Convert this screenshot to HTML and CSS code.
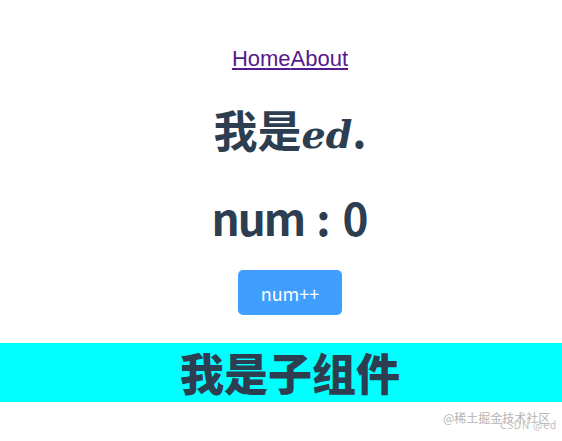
FILE: index.html
```html
<!DOCTYPE html>
<html lang="zh-CN">
<head>
<meta charset="utf-8">
<title>Vue App</title>
<link rel="stylesheet" href="styles.css">
</head>
<body>
<div class="app">
  <nav class="nav"><a href="#/" class="link">Home</a><a href="#/about" class="link">About</a></nav>
  <h1 class="title">我是<span class="name">ed</span>.</h1>
  <h1 class="count"><span class="num">num</span> : 0</h1>
  <button class="btn" type="button">num++</button>
  <div class="child"><h1 class="child-title">我是子组件</h1></div>
</div>
<div class="watermark"><span class="wm-main">@稀土掘金技术社区</span><span class="wm-sub">CSDN @ed</span></div>
</body>
</html>
```

FILE: styles.css
```css
html, body {
  margin: 0;
  padding: 0;
  background: #ffffff;
  overflow: hidden;
}
body {
  width: 562px;
  height: 441px;
  position: relative;
}
.app {
  width: 580px;
  text-align: center;
  color: #2c3e50;
  font-family: "Noto Sans CJK SC", sans-serif;
  display: flex;
  flex-direction: column;
  align-items: center;
}
.nav {
  padding-top: 45px;
  font-family: "Liberation Sans", Arial, sans-serif;
  font-size: 22px;
  line-height: 28px;
}
.link {
  color: #551a8b;
  text-decoration: underline;
}
.title {
  margin: 26px 0 0;
  font-size: 44px;
  font-weight: 700;
  line-height: 60px;
}
.name {
  font-family: "DejaVu Serif", serif;
  font-style: italic;
  font-size: 38px;
}
.count {
  margin: 22px 0 0;
  font-size: 44px;
  font-weight: 700;
  line-height: 60px;
  word-spacing: 2px;
}
.num {
  letter-spacing: -2px;
}
.btn {
  margin-top: 23px;
  width: 104px;
  height: 45px;
  border: none;
  border-radius: 5px;
  background: #409eff;
  color: #ffffff;
  font-family: "Noto Sans CJK SC", sans-serif;
  font-size: 18px;
}
.child {
  align-self: stretch;
  margin-top: 28px;
  background: #00ffff;
  height: 59px;
}
.child-title {
  margin: 0;
  font-size: 44px;
  font-weight: 900;
  line-height: 59px;
}
.watermark {
  position: absolute;
  left: 443px;
  top: 409px;
  font-family: "Noto Sans CJK SC", sans-serif;
  color: #b4b4b4;
  white-space: nowrap;
}
.wm-main {
  display: block;
  font-size: 12px;
  line-height: 18px;
}
.wm-sub {
  position: absolute;
  left: 57px;
  top: 10px;
  font-size: 10.5px;
  line-height: 12px;
  letter-spacing: 0.6px;
  color: #c0c0c0;
  white-space: nowrap;
}
```
